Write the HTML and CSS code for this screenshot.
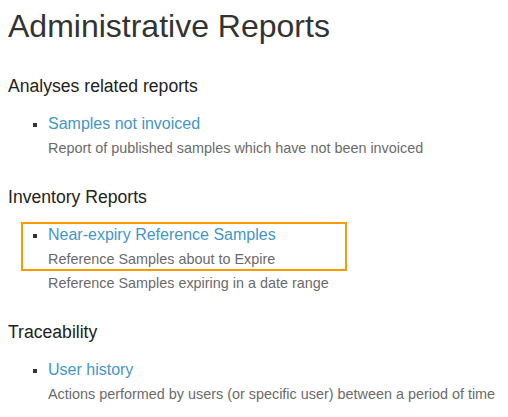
FILE: index.html
```html
<!DOCTYPE html>
<html lang="en">
<head>
<meta charset="utf-8">
<title>Administrative Reports</title>
<link rel="stylesheet" href="styles.css">
</head>
<body>
<main class="page">
  <h1 class="title">Administrative Reports</h1>

  <section class="group">
    <h3 class="group-title">Analyses related reports</h3>
    <ul class="reports">
      <li class="report">
        <a class="report-link" href="#">Samples not invoiced</a>
        <div class="report-desc">Report of published samples which have not been invoiced</div>
      </li>
    </ul>
  </section>

  <section class="group">
    <h3 class="group-title">Inventory Reports</h3>
    <ul class="reports">
      <li class="report highlighted">
        <a class="report-link" href="#">Near-expiry Reference Samples</a>
        <div class="report-desc">Reference Samples about to Expire</div>
      </li>
      <li class="report no-marker">
        <div class="report-desc">Reference Samples expiring in a date range</div>
      </li>
    </ul>
  </section>

  <section class="group">
    <h3 class="group-title">Traceability</h3>
    <ul class="reports">
      <li class="report">
        <a class="report-link" href="#">User history</a>
        <div class="report-desc">Actions performed by users (or specific user) between a period of time</div>
      </li>
    </ul>
  </section>
</main>
</body>
</html>
```

FILE: styles.css
```css
html, body {
  margin: 0;
  padding: 0;
  background: #ffffff;
}

body {
  font-family: "Liberation Sans", Arial, Helvetica, sans-serif;
  color: #333333;
}

.page {
  padding: 8px;
}

.title {
  margin: 0 0 30px 0;
  font-size: 32px;
  line-height: 36px;
  font-weight: normal;
  color: #333333;
}

.group {
  margin-bottom: 25px;
}

.group:last-child {
  margin-bottom: 0;
}

.group-title {
  margin: 0;
  font-size: 17.6px;
  line-height: 24px;
  font-weight: normal;
  color: #222222;
}

.reports {
  margin: 14px 0 0 0;
  padding-left: 40px;
  list-style: square;
}

.report::marker {
  color: #333333;
  font-size: 13px;
}

.report.no-marker {
  list-style: none;
}

.report-link {
  display: block;
  font-size: 16px;
  line-height: 24px;
  color: #4596c8;
  text-decoration: none;
}

.report-desc {
  font-size: 14.4px;
  line-height: 24px;
  color: #6b6b6b;
}

.highlighted {
  position: relative;
}

.highlighted::after {
  content: "";
  position: absolute;
  left: -27px;
  top: -1px;
  width: 322px;
  bottom: 0;
  border: 2px solid #ff9900;
  pointer-events: none;
}
```
